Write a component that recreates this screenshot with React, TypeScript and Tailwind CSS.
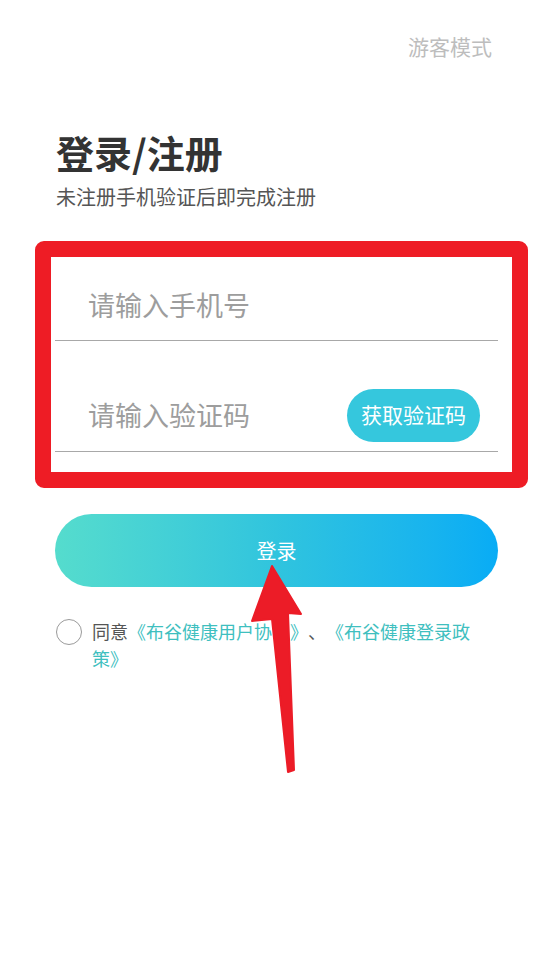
export default function App() {
  return (
    <div className="relative min-h-[953px] w-full bg-white font-['Noto_Sans_CJK_SC','Noto_Sans',sans-serif] [text-spacing-trim:space-all]">
      <div className="flex justify-end pr-[62px] pt-[32px]">
        <span className="text-[21px] leading-[28px] text-[#bdbdbd]">游客模式</span>
      </div>

      <div className="px-[56px]">
        <h1 className="mt-[70px] text-[38px] font-bold leading-[44px] text-[#333333]">登录/注册</h1>
        <p className="mt-[9px] text-[20px] leading-[28px] text-[#555555]">未注册手机验证后即完成注册</p>
      </div>

      <div className="relative mx-[55px] mt-[58px] w-[443px]">
        <div className="flex h-[72px] items-center border-b border-[#a8a8a8] pl-[33px]">
          <span className="text-[27px] leading-[36px] text-[#9d9d9d]">请输入手机号</span>
        </div>
        <div className="border-b border-[#a8a8a8] pt-[38px]">
          <div className="flex h-[72px] items-center justify-between pl-[33px] pr-[18px]">
            <span className="text-[27px] leading-[36px] text-[#9d9d9d]">请输入验证码</span>
            <button className="h-[53px] w-[133px] rounded-full bg-[#35c7dd] text-[21px] text-white">获取验证码</button>
          </div>
        </div>
        <div className="pointer-events-none absolute left-[-20px] top-[-28px] h-[247px] w-[493px] rounded-[9px] border-[16px] border-[#ee1c25]" />
      </div>

      <div className="mx-[55px] mt-[62px]">
        <button className="flex h-[73px] w-[443px] items-center justify-center rounded-full bg-gradient-to-r from-[#55dccd] via-[#30c4de] to-[#08acf5] text-[20px] text-white">
          登录
        </button>
      </div>

      <div className="mx-[56px] mt-[31px] flex gap-[10px]">
        <div className="mt-[1px] h-[26px] w-[26px] shrink-0 rounded-full border-[1.5px] border-[#9a9a9a]" />
        <p className="w-[390px] text-[18px] leading-[27px] text-[#555555]">
          同意<span className="text-[#3fbfbf]">《布谷健康用户协议》</span>、<span className="text-[#3fbfbf]">《布谷健康登录政策》</span>
        </p>
      </div>

      <svg className="pointer-events-none absolute left-0 top-0" width="554" height="953" viewBox="0 0 554 953">
        <polygon
          points="272,566 301,614 288,613 294,770 288,772 272,619 252,621"
          fill="#ec1c27"
          stroke="#ec1c27"
          strokeLinejoin="round"
          strokeWidth="2"
        />
      </svg>
    </div>
  );
}
